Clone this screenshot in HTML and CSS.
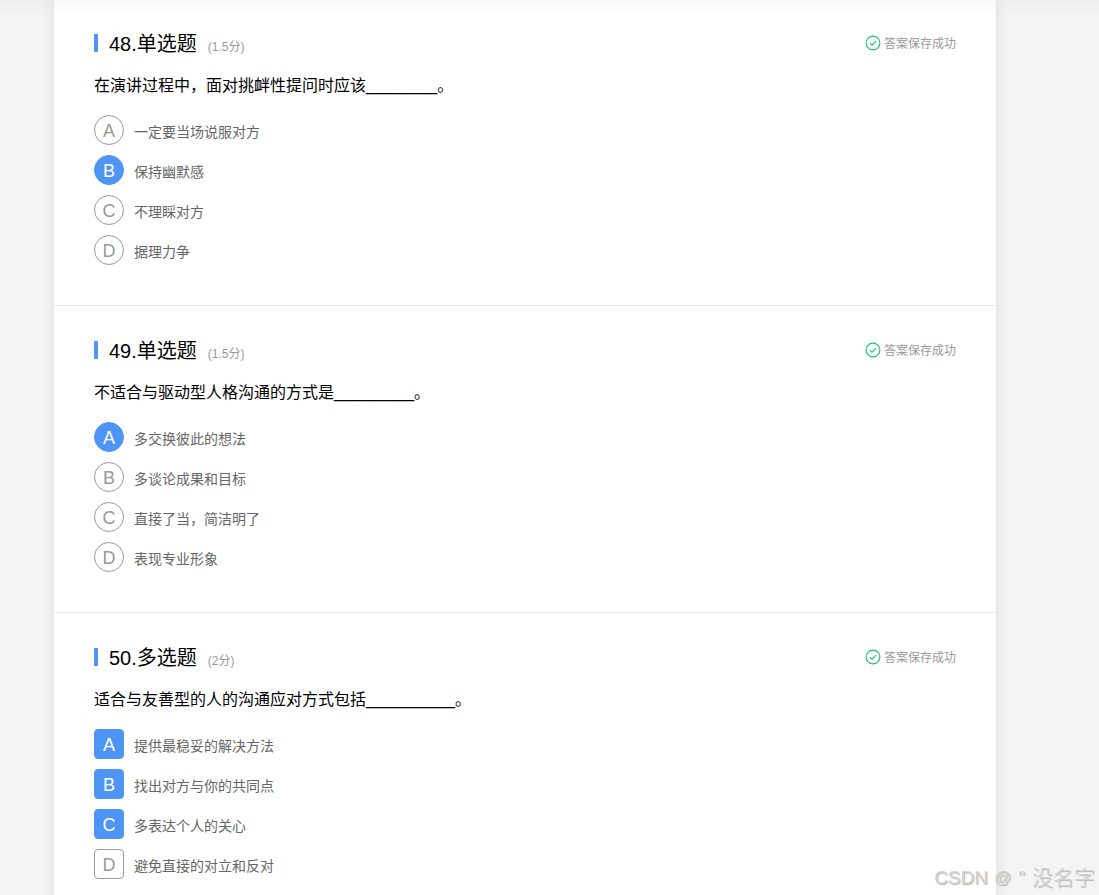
FILE: index.html
```html
<!DOCTYPE html>
<html lang="zh-CN">
<head>
<meta charset="UTF-8">
<meta name="viewport" content="width=device-width, initial-scale=1.0">
<title>考试</title>
<link rel="stylesheet" href="styles.css">
</head>
<body>
<div class="paper">
  <div class="question">
    <div class="question-head">
      <span class="bar"></span>
      <h3 class="title">48.单选题</h3>
      <span class="score">(1.5分)</span>
      <div class="saved">
        <svg class="saved-icon" viewBox="0 0 16 16"><circle cx="8" cy="8" r="6.9"/><path d="M4.8 8.2l2.2 2 4.1-4.1"/></svg>
        <span>答案保存成功</span>
      </div>
    </div>
    <div class="stem">在演讲过程中，面对挑衅性提问时应该________。</div>
    <ul class="options">
      <li class="option"><span class="letter">A</span><span class="text">一定要当场说服对方</span></li>
      <li class="option"><span class="letter checked">B</span><span class="text">保持幽默感</span></li>
      <li class="option"><span class="letter">C</span><span class="text">不理睬对方</span></li>
      <li class="option"><span class="letter">D</span><span class="text">据理力争</span></li>
    </ul>
  </div>

  <div class="question">
    <div class="question-head">
      <span class="bar"></span>
      <h3 class="title">49.单选题</h3>
      <span class="score">(1.5分)</span>
      <div class="saved">
        <svg class="saved-icon" viewBox="0 0 16 16"><circle cx="8" cy="8" r="6.9"/><path d="M4.8 8.2l2.2 2 4.1-4.1"/></svg>
        <span>答案保存成功</span>
      </div>
    </div>
    <div class="stem">不适合与驱动型人格沟通的方式是_________。</div>
    <ul class="options">
      <li class="option"><span class="letter checked">A</span><span class="text">多交换彼此的想法</span></li>
      <li class="option"><span class="letter">B</span><span class="text">多谈论成果和目标</span></li>
      <li class="option"><span class="letter">C</span><span class="text">直接了当，简洁明了</span></li>
      <li class="option"><span class="letter">D</span><span class="text">表现专业形象</span></li>
    </ul>
  </div>

  <div class="question multiple">
    <div class="question-head">
      <span class="bar"></span>
      <h3 class="title">50.多选题</h3>
      <span class="score">(2分)</span>
      <div class="saved">
        <svg class="saved-icon" viewBox="0 0 16 16"><circle cx="8" cy="8" r="6.9"/><path d="M4.8 8.2l2.2 2 4.1-4.1"/></svg>
        <span>答案保存成功</span>
      </div>
    </div>
    <div class="stem">适合与友善型的人的沟通应对方式包括__________。</div>
    <ul class="options">
      <li class="option"><span class="letter checked">A</span><span class="text">提供最稳妥的解决方法</span></li>
      <li class="option"><span class="letter checked">B</span><span class="text">找出对方与你的共同点</span></li>
      <li class="option"><span class="letter checked">C</span><span class="text">多表达个人的关心</span></li>
      <li class="option"><span class="letter">D</span><span class="text">避免直接的对立和反对</span></li>
    </ul>
  </div>
</div>
<div class="top-shadow"></div>
<div class="watermark"><span>CSDN</span><span class="at">@</span><span class="quote">"</span><span class="name">没名字</span></div>
</body>
</html>
```
FILE: styles.css
```css
* {
  box-sizing: border-box;
}

body {
  margin: 0;
  height: 895px;
  overflow: hidden;
  background-color: #f4f4f4;
  font-family: "Liberation Sans", "Noto Sans CJK SC", sans-serif;
  color: #000;
}

.paper {
  width: 942px;
  margin: -1px 0 0 54px;
  background-color: #fff;
  box-shadow: 0 0 14px rgba(0, 0, 0, 0.1);
}

.question {
  height: 307px;
  padding: 29px 40px 0;
  border-bottom: 1px solid #ebebeb;
}

.question-head {
  display: flex;
  align-items: center;
  height: 30px;
}

.bar {
  width: 4px;
  height: 18px;
  margin-right: 11px;
  background-color: #4e95f5;
}

.title {
  margin: 0;
  padding-top: 2px;
  font-size: 20px;
  font-weight: normal;
  line-height: 28px;
}

.score {
  margin-left: 11px;
  padding-top: 7px;
  font-size: 12px;
  line-height: 20px;
  color: #999;
}

.saved {
  display: flex;
  align-items: center;
  gap: 3px;
  margin-left: auto;
  font-size: 12px;
  line-height: 20px;
  color: #999;
}

.saved span {
  padding-top: 2px;
}

.saved-icon {
  width: 16px;
  height: 16px;
  fill: none;
  stroke: #19be7b;
  stroke-width: 1.1;
}

.stem {
  margin-top: 15px;
  font-size: 16px;
  line-height: 26px;
}

.options {
  display: flex;
  flex-direction: column;
  gap: 10px;
  margin: 16px 0 0;
  padding: 0;
  list-style: none;
}

.option {
  display: flex;
  align-items: center;
  gap: 10px;
  height: 30px;
}

.letter {
  width: 30px;
  height: 30px;
  border: 1px solid #999;
  border-radius: 50%;
  font-size: 18px;
  line-height: 30px;
  text-align: center;
  color: #999;
}

.multiple .letter {
  border-radius: 4px;
}

.letter.checked {
  border-color: #4e95f5;
  background-color: #4e95f5;
  color: #fff;
}

.text {
  padding-top: 3px;
  font-size: 14px;
  line-height: 20px;
  color: #666;
}

.top-shadow {
  position: absolute;
  top: 0;
  left: 0;
  width: 100%;
  height: 14px;
  background: linear-gradient(rgba(0, 0, 0, 0.025), rgba(0, 0, 0, 0));
}

.watermark {
  display: flex;
  position: absolute;
  right: 4px;
  bottom: 2px;
  font-size: 19px;
  line-height: 30px;
  color: #d4d4d4;
  text-shadow: 1px 1px 1px #b4b4b4;
  white-space: nowrap;
}

.at {
  margin-left: 6px;
  font-size: 17px;
}

.quote {
  margin: 0 7px;
}

.name {
  font-size: 21px;
  font-weight: 300;
}
```
